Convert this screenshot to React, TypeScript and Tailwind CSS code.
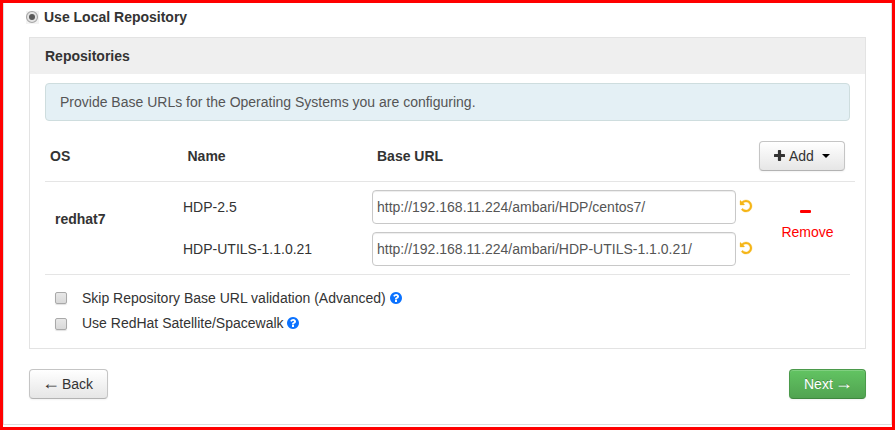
import React from "react";

const UNDO =
  "M1664 896q0 156-61 298t-164 245-245 164-298 61q-172 0-327-72.5t-264-204.5q-7-10-6.5-22.5t8.5-20.5l137-138q10-9 25-9 16 2 23 12 73 95 179 147t225 52q104 0 198.5-40.5t163.5-109.5 109.5-163.5 40.5-198.5-40.5-198.5-109.5-163.5-163.5-109.5-198.5-40.5q-98 0-188 35.5t-160 101.5l137 138q31 30 14 69-17 40-59 40h-448q-26 0-45-19t-19-45v-448q0-42 40-59 39-17 69 14l130 129q107-101 244.5-156.5t284.5-55.5q156 0 298 61t245 164 164 245 61 298z";
const QUESTION =
  "M1024 1376v-192q0-14-9-23t-23-9h-192q-14 0-23 9t-9 23v192q0 14 9 23t23 9h192q14 0 23-9t9-23zm256-672q0-88-55.5-163t-138.5-116-170-41q-243 0-371 213-15 24 8 42l132 100q7 6 19 6 16 0 25-12 53-68 86-92 34-24 86-24 48 0 85.5 26t37.5 59q0 38-20 61t-68 45q-63 28-115.5 86.5t-52.5 125.5v36q0 14 9 23t23 9h192q14 0 23-9t9-23q0-19 21.5-49.5t54.5-49.5q32-18 49-28.5t46-35 44.5-48 28-60.5 12.5-81zm384 192q0 209-103 385.5t-279.5 279.5-385.5 103-385.5-103-279.5-279.5-103-385.5 103-385.5 279.5-279.5 385.5-103 385.5 103 279.5 279.5 103 385.5z";

function Glyph({ path, className }: { path: string; className: string }) {
  return (
    <svg viewBox="128 128 1536 1536" className={className} fill="currentColor" aria-hidden="true">
      <path d={path} />
    </svg>
  );
}

function RepoRow({ name, url }: { name: string; url: string }) {
  return (
    <div className="flex h-[34px] items-center">
      <span className="w-[189px]">{name}</span>
      <input
        type="text"
        defaultValue={url}
        className="h-[34px] w-[364px] rounded-[4px] border border-[#c8c8c8] bg-white px-1 text-sm text-[#555] shadow-[inset_0_1px_1px_rgba(0,0,0,0.075)] outline-none"
      />
      <Glyph
        path={UNDO}
        className="mb-0.5 ml-1 size-3 overflow-visible stroke-[#f5b517] stroke-[40] text-[#f5b517]"
      />
    </div>
  );
}

function Option({ label, boxClass, iconClass }: { label: string; boxClass: string; iconClass: string }) {
  return (
    <label className="flex h-[25px] items-center">
      <span
        className={`mr-[15px] size-3 rounded-[2px] border border-[#a9a9a9] bg-linear-to-b from-[#e8e8e8] to-[#d9d9d9] shadow-[0_1px_1px_rgba(0,0,0,0.12)] ${boxClass}`}
      />
      <span>{label}</span>
      <Glyph path={QUESTION} className={`size-3 text-[#0b72ff] ${iconClass}`} />
    </label>
  );
}

export default function App() {
  return (
    <div className="h-[430px] w-[895px] border-[3px] border-[#ff0000] bg-white pb-[2px] font-['Liberation_Sans',Arial,sans-serif] text-sm leading-5 text-[#333]">
      <div className="flex h-[422px] flex-col border-x border-b border-[#ddd] px-[25px] pt-1">
        <div className="-ml-[3px] flex h-5 items-center">
          <svg viewBox="0 0 12 12" className="mr-1.5 size-3 overflow-visible">
            <rect x="0" y="0" width="13" height="13" fill="#f3f3f3" />
            <circle cx="6" cy="6" r="5.5" fill="#e4e4e4" stroke="#a6a6a6" strokeWidth="1.1" />
            <circle cx="6" cy="6" r="3" fill="#5a5a5a" />
          </svg>
          <span className="font-bold">Use Local Repository</span>
        </div>

        <section className="mt-[10px] h-[312px] w-[837px] shrink-0 border border-[#e3e3e3]">
          <h2 className="h-9 bg-[#efefef] pl-[15px] pt-2 font-bold">Repositories</h2>
          <div className="ml-[15px] mt-[9px] flex h-[38px] w-[805px] items-center rounded-[4px] border border-[#ceddde] bg-[#e4f0f5] pl-[14px] text-[#555]">
            Provide Base URLs for the Operating Systems you are configuring.
          </div>

          <div className="ml-[15px] flex h-[61px] w-[810px] items-center border-b border-[#e5e5e5] pl-[5px] pt-[9px] font-bold">
            <span className="w-[137.5px]">OS</span>
            <span className="w-[189.5px]">Name</span>
            <span className="w-[382px]">Base URL</span>
            <button className="flex h-[30px] w-[86px] items-center rounded-[4px] border border-[#c5c5c5] border-b-[#b3b3b3] bg-linear-to-b from-white to-[#e6e6e6] pl-[14px] font-normal shadow-[0_1px_2px_rgba(0,0,0,0.05)]">
              <svg viewBox="0 0 11 11" className="size-[11px]" fill="currentColor">
                <path d="M4.6 0h1.8a.7.7 0 0 1 .7.7v3.2h3.2a.7.7 0 0 1 .7.7v1.8a.7.7 0 0 1-.7.7H7.1v3.2a.7.7 0 0 1-.7.7H4.6a.7.7 0 0 1-.7-.7V7.1H.7a.7.7 0 0 1-.7-.7V4.6a.7.7 0 0 1 .7-.7h3.2V.7a.7.7 0 0 1 .7-.7z" />
              </svg>
              <span className="ml-1">Add</span>
              <span className="ml-2 border-x-4 border-t-4 border-x-transparent border-t-black" />
            </button>
          </div>

          <div className="ml-[15px] flex h-[93px] w-[805px] border-b border-[#e5e5e5] pl-[10px] pt-2">
            <span className="w-32 pt-[19px] font-bold">redhat7</span>
            <div className="flex w-[570px] flex-col gap-2">
              <RepoRow name="HDP-2.5" url="http://192.168.11.224/ambari/HDP/centos7/" />
              <RepoRow name="HDP-UTILS-1.1.0.21" url="http://192.168.11.224/ambari/HDP-UTILS-1.1.0.21/" />
            </div>
            <div className="ml-[28px] flex w-[53px] flex-col items-center pt-5 text-[#ff0000]">
              <span className="mr-1 h-[3px] w-[11px] rounded-[1px] bg-[#ff0000]" />
              <span className="mt-[9px]">Remove</span>
            </div>
          </div>

          <div className="pl-[25px] pt-[10px]">
            <Option label="Skip Repository Base URL validation (Advanced)" boxClass="mt-0" iconClass="ml-1" />
            <Option label="Use RedHat Satellite/Spacewalk" boxClass="mt-0.5" iconClass="ml-[3px]" />
          </div>
        </section>

        <div className="mt-5 flex w-[837px] justify-between">
          <button className="flex h-[30px] w-[79px] items-center rounded-[4px] border border-[#c5c5c5] border-b-[#b3b3b3] bg-linear-to-b from-white to-[#e6e6e6] pl-[10px] shadow-[0_1px_2px_rgba(0,0,0,0.05)]">
            <span className="mb-0.5 w-[22px] text-[18px] leading-5">←</span>
            <span>Back</span>
          </button>
          <button className="flex h-[30px] w-[77px] items-center rounded-[4px] border border-[#4b9a4b] border-b-[#3f873f] bg-linear-to-b from-[#62c462] to-[#51a351] pl-[14px] text-white shadow-[inset_0_1px_0_rgba(255,255,255,0.2),0_1px_2px_rgba(0,0,0,0.05)] [text-shadow:0_-1px_0_rgba(0,0,0,0.25)]">
            <span>Next</span>
            <span className="mb-0.5 ml-[2px] text-[18px] leading-5">→</span>
          </button>
        </div>
      </div>
    </div>
  );
}
